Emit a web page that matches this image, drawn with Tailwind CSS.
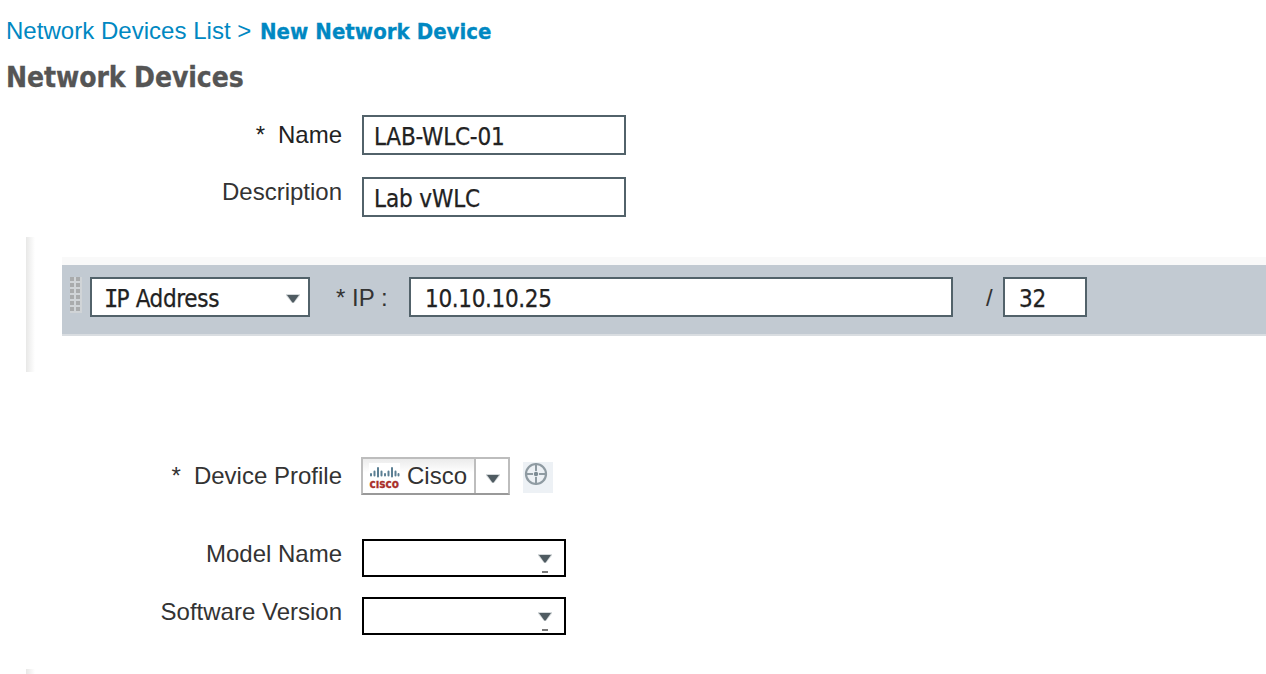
<!DOCTYPE html>
<html lang="en">
<head>
<meta charset="utf-8">
<title>Network Devices</title>
<script src="https://cdn.jsdelivr.net/npm/@tailwindcss/browser@4"></script>
</head>
<body class="bg-white w-[1266px] h-[674px] overflow-hidden font-['Liberation_Sans',Arial,sans-serif] text-[24px] leading-[28px] text-[#333] whitespace-nowrap">
<svg class="hidden">
  <defs>
    <symbol id="caret" viewBox="0 0 14 10"><path d="M0 0H14V1.5L8 9H6L0 1.5Z" fill="#aab1b5" opacity=".5"/><path d="M1 1H13L7.6 8.5H6.4Z" fill="#4f5b61"/></symbol>
  </defs>
</svg>
<nav class="flex h-[62px] items-center pl-[6px] text-[#0088c2]">
  <a class="w-[254px] tracking-[0.03px]">Network Devices List &gt;</a>
  <b class="pt-px font-['DejaVu_Sans_Condensed','DejaVu_Sans',sans-serif] [font-stretch:condensed] text-[22px] tracking-[0.03px] [-webkit-text-stroke:0.3px]">New Network Device</b>
</nav>
<h1 class="flex h-[30px] items-center pt-px pl-[6px] font-bold font-['DejaVu_Sans_Condensed','DejaVu_Sans',sans-serif] [font-stretch:condensed] text-[28px] text-[#555] tracking-[-0.08px] [-webkit-text-stroke:0.3px]">Network Devices</h1>
<form>
  <div class="mt-[23px] flex h-[40px]">
    <label class="w-[342px] pt-[6px] text-right text-[#222]"><span class="mr-[13px]">*</span>Name</label>
    <div class="ml-[20px] flex w-[264px] items-center border-2 border-[#52626a] pl-[10px] pt-[3px] font-['DejaVu_Sans_Condensed','DejaVu_Sans',sans-serif] [font-stretch:condensed] text-[#222] [-webkit-text-stroke:0.25px]"><span class="tracking-[-0.23px]">LAB-WLC-01</span></div>
  </div>
  <div class="mt-[22px] flex h-[40px]">
    <label class="w-[342px] pt-[1px] text-right">Description</label>
    <div class="ml-[20px] flex w-[264px] items-center border-2 border-[#52626a] pl-[10px] pt-[3px] font-['DejaVu_Sans_Condensed','DejaVu_Sans',sans-serif] [font-stretch:condensed] text-[#222] [-webkit-text-stroke:0.25px]"><span class="tracking-[-0.13px]">Lab vWLC</span></div>
  </div>
  <section class="mt-[20px] ml-[26px] flex h-[135px]">
    <div class="w-[9px] bg-linear-to-r from-[#e8e8e7] to-white"></div>
    <div class="ml-[27px] flex-1 pt-[20px]">
      <div class="h-[8px] bg-[#f9f9f9]"></div>
      <div class="flex h-[71px] items-start border-b-2 border-[#d9dde1] bg-[#c2cad2] pt-[12px] pl-[8px]">
        <svg class="h-[36px] w-[12px]" viewBox="0 0 12 36"><defs><pattern id="grip" width="6" height="6" patternUnits="userSpaceOnUse"><rect width="6" height="6" fill="#d0d4d7"/><rect width="4" height="4" fill="#a9abac"/></pattern></defs><rect width="12" height="36" fill="url(#grip)"/></svg>
        <div class="ml-[8px] flex h-[40px] w-[220px] items-center justify-between border-2 border-[#52626a] bg-white pt-[3px] pr-[8px] pl-[13px] font-['DejaVu_Sans_Condensed','DejaVu_Sans',sans-serif] [font-stretch:condensed] text-[#222]">
          <span class="tracking-[-0.35px] [-webkit-text-stroke:0.25px]"><span class="-ml-[1px] font-['DejaVu_Sans_Mono',monospace] tracking-[-2px]">I</span>P Address</span>
          <svg class="h-[10px] w-[14px]"><use href="#caret"/></svg>
        </div>
        <span class="ml-[26px] w-[73px] pt-[7px]">* IP :</span>
        <div class="flex h-[40px] w-[544px] items-center border-2 border-[#52626a] bg-white pt-[4px] pl-[14px] font-['DejaVu_Sans_Condensed','DejaVu_Sans',sans-serif] [font-stretch:condensed] text-[#222] [-webkit-text-stroke:0.25px]"><span class="tracking-[-0.35px]">10.10.10.25</span></div>
        <span class="ml-[33px] w-[17px] pt-[7px]">/</span>
        <div class="flex h-[40px] w-[84px] items-center border-2 border-[#52626a] bg-white pt-[4px] pl-[14px] font-['DejaVu_Sans_Condensed','DejaVu_Sans',sans-serif] [font-stretch:condensed] text-[#222] [-webkit-text-stroke:0.25px]"><span class="tracking-[-0.35px]">32</span></div>
      </div>
    </div>
  </section>
  <div class="mt-[85px] flex h-[38px]">
    <label class="w-[342px] pt-[5px] text-right"><span class="mr-[13px]">*</span>Device Profile</label>
    <div class="ml-[19px] flex w-[149px] border-2 border-[#bdbdbd] border-b-[#999]">
      <div class="flex w-[113px] items-center border-r-2 border-[#bdbdbd] bg-linear-to-b from-[#ebebeb] to-white to-40% pl-[6px]">
        <svg class="h-[26px] w-[31px] shrink-0 overflow-visible bg-white" viewBox="0 0 31 26">
          <g stroke="#5b7f93" stroke-width="2" stroke-linecap="round"><path d="M2 11v1.500M5.500 8.500v4M9 5v8.500M12.500 8.500v4M16 11v1.500M19.500 8.500v4M23 5v8.500M26.500 8.500v4M29.500 11v1.500"/></g>
          <text x="0.500" y="24.500" textLength="29.500" lengthAdjust="spacingAndGlyphs" font-family="DejaVu Sans" font-weight="bold" font-size="13" fill="#a92e29" stroke="#a92e29" stroke-width=".3">cısco</text>
        </svg>
        <span class="ml-[7px]">Cisco</span>
      </div>
      <div class="flex flex-1 items-center justify-center pt-[6px] pl-[2px]"><svg class="h-[10px] w-[14px]"><use href="#caret"/></svg></div>
    </div>
    <div class="mt-[5px] ml-[13px] h-[31px] w-[30px] bg-[#edf1f5]">
      <svg class="h-[31px] w-[30px]" viewBox="0 0 30 31" fill="none"><circle cx="13" cy="12" r="10" stroke="#8f9ba2" stroke-width="2.200"/><path d="M13 1v8M13 15v8M2 12h8M16 12h8" stroke="#8f9ba2" stroke-width="2"/><circle cx="13" cy="12" r="2.200" fill="#7c8b94"/></svg>
    </div>
  </div>
  <div class="mt-[44px] flex h-[38px]">
    <label class="w-[342px] pt-[1px] text-right">Model Name</label>
    <div class="ml-[20px] flex w-[204px] justify-end border-2 border-black pt-[12px] pr-[12px]"><svg class="h-[22px] w-[14px]" viewBox="0 0 14 22"><use href="#caret" width="14" height="10" y="1"/><path d="M4 19h6" stroke="#777" stroke-width="2"/></svg></div>
  </div>
  <div class="mt-[20px] flex h-[38px]">
    <label class="w-[342px] pt-[1px] text-right">Software Version</label>
    <div class="ml-[20px] flex w-[204px] justify-end border-2 border-black pt-[12px] pr-[12px]"><svg class="h-[22px] w-[14px]" viewBox="0 0 14 22"><use href="#caret" width="14" height="10" y="1"/><path d="M4 19h6" stroke="#777" stroke-width="2"/></svg></div>
  </div>
</form>
<div class="mt-[34px] ml-[26px] h-[5px] w-[9px] bg-linear-to-r from-[#e8e8e7] to-white"></div>
</body>
</html>
